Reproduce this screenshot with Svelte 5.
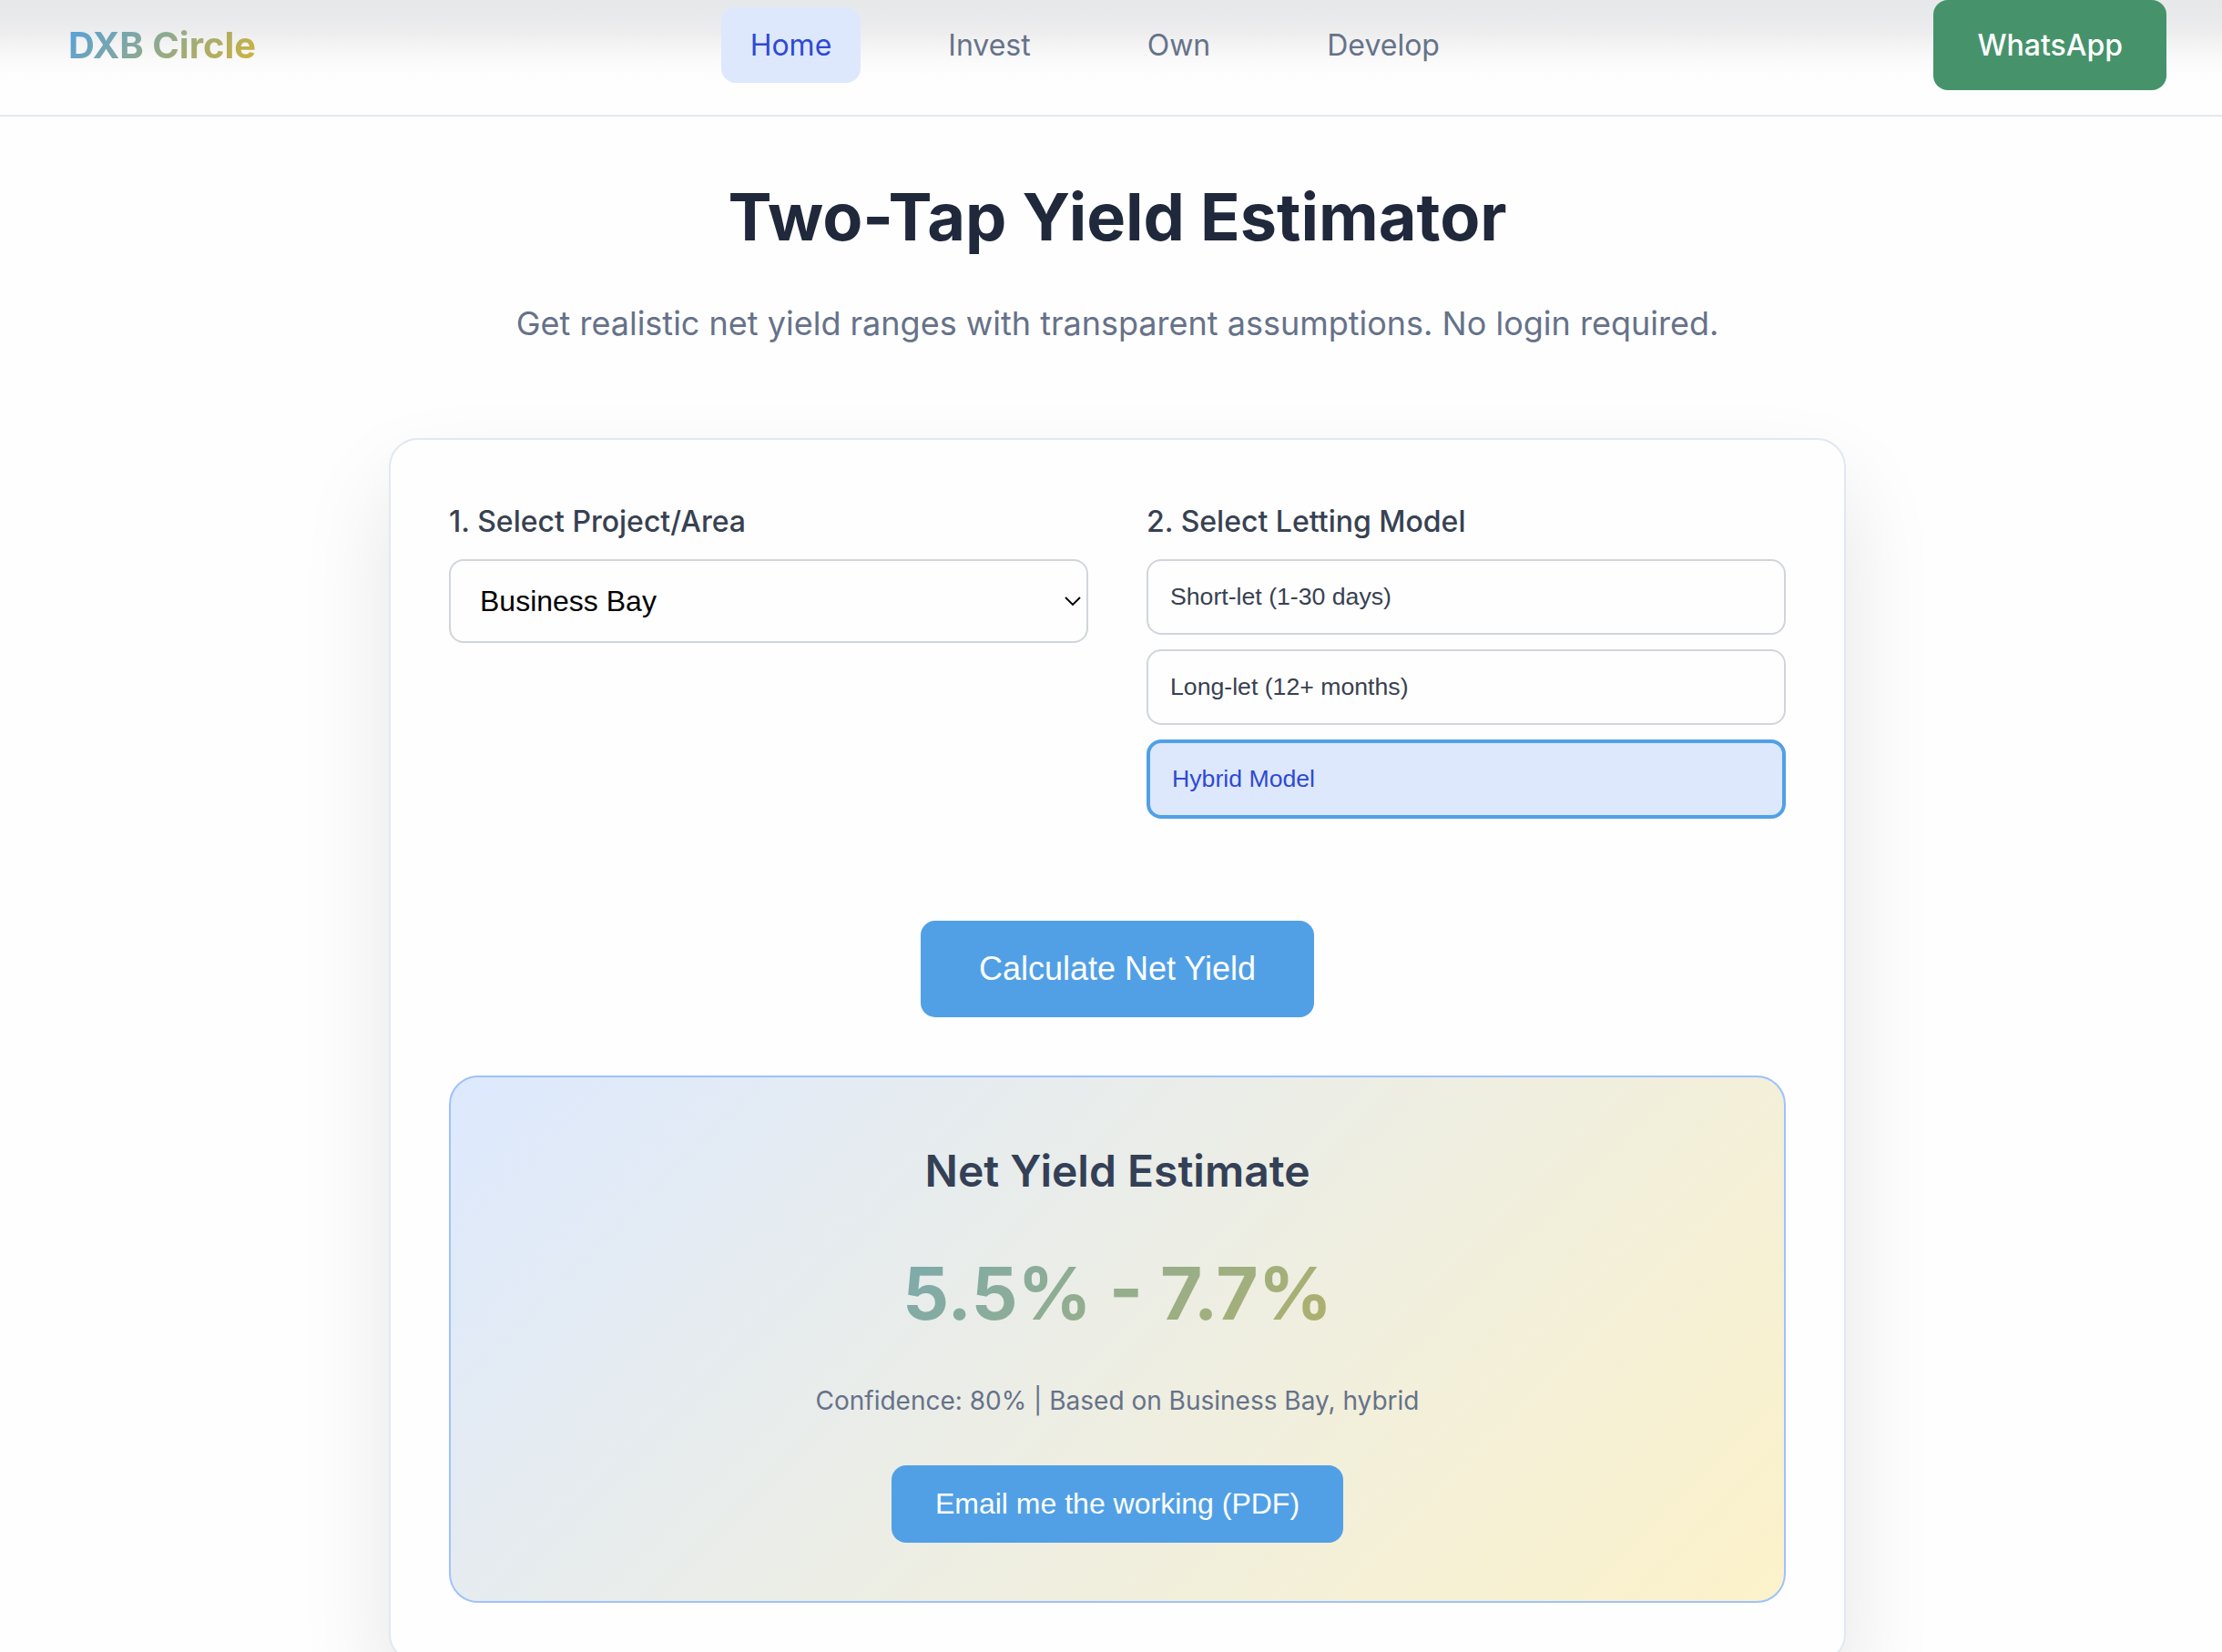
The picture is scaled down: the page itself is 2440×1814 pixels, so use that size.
<script>
  const links = ['Home', 'Invest', 'Own', 'Develop'];
  const models = [
    { id: 'short', label: 'Short-let (1-30 days)' },
    { id: 'long', label: 'Long-let (12+ months)' },
    { id: 'hybrid', label: 'Hybrid Model' }
  ];
  let active = $state('Home');
  let model = $state('hybrid');
</script>

<div class="viewport">
  <div class="page">
    <header>
      <div class="logo">DXB Circle</div>
      <nav>
        {#each links as link}
          <button class="link" class:active={active === link} onclick={() => (active = link)}>{link}</button>
        {/each}
      </nav>
      <button class="whatsapp">WhatsApp</button>
    </header>

    <main>
      <h1>Two-Tap Yield Estimator</h1>
      <p class="lead">Get realistic net yield ranges with transparent assumptions. No login required.</p>

      <section class="card">
        <div class="fields">
          <div>
            <div class="label">1. Select Project/Area</div>
            <div class="select">
              <span>Business Bay</span>
              <svg width="20" height="12" viewBox="0 0 20 12"><path d="M2 2l8 8 8-8" fill="none" stroke="#000" stroke-width="1.9" /></svg>
            </div>
          </div>
          <div>
            <div class="label">2. Select Letting Model</div>
            <div class="options">
              {#each models as m}
                <button class="option" class:selected={model === m.id} onclick={() => (model = m.id)}>{m.label}</button>
              {/each}
            </div>
          </div>
        </div>

        <button class="primary calc">Calculate Net Yield</button>

        <div class="result">
          <h2>Net Yield Estimate</h2>
          <div class="range">5.5% - 7.7%</div>
          <p class="basis">Confidence: 80% | Based on Business Bay, hybrid</p>
          <button class="primary email">Email me the working (PDF)</button>
        </div>
      </section>
    </main>
  </div>
</div>

<style>
  :global(body) {
    margin: 0;
    background: #fff;
  }
  .viewport {
    height: 1814px;
    overflow: hidden;
    background: #fefefe;
    font-family: Inter, sans-serif;
    font-size: 32px;
    line-height: 1.6;
  }
  .page {
    width: 2454px;
  }
  button {
    border: 0;
    margin: 0;
    font-family: 'Liberation Sans', Arial, sans-serif;
    line-height: normal;
    border-radius: 16px;
    cursor: pointer;
  }
  header {
    box-sizing: border-box;
    height: 128px;
    padding: 0 75px 27px;
    display: flex;
    align-items: center;
    justify-content: space-between;
    border-bottom: 2px solid #e2e8f0;
    background: linear-gradient(#e7e8ea 0, #e9eaec 22px, #ededee 35px, #f4f4f5 50px, #fafafa 66px, #fdfdfd 80px, #fefefe 92px);
  }
  .logo {
    font-size: 40px;
    font-weight: 700;
    background: linear-gradient(135deg, #4fa0e5, #d6b330);
    background-clip: text;
    color: transparent;
  }
  nav {
    display: flex;
    gap: 64px;
  }
  .link {
    padding: 16px 32px;
    font: 400 32px/1.6 Inter, sans-serif;
    color: #667289;
    background: none;
  }
  .link.active {
    color: #2f49d3;
    background: #dde8fd;
  }
  .whatsapp {
    padding: 24px 48px;
    font: 500 32px/1.6 Inter, sans-serif;
    color: #fff;
    background: #46936b;
  }
  main {
    width: 1600px;
    margin: 0 auto;
    padding-top: 64px;
    text-align: center;
  }
  h1 {
    margin: 0 0 42px;
    font-size: 72px;
    font-weight: 700;
    line-height: 92px;
    color: #20283b;
  }
  .lead {
    margin: 0 0 97px;
    font-size: 36px;
    line-height: 58px;
    color: #667289;
  }
  .card {
    padding: 64px;
    border: 2px solid #e2e8f0;
    border-radius: 32px;
    background: #fefefe;
    box-shadow: 0 50px 100px rgba(0, 0, 0, 0.1);
  }
  .fields {
    display: grid;
    grid-template-columns: 1fr 1fr;
    gap: 64px;
    text-align: left;
  }
  .label {
    margin-bottom: 16px;
    font-weight: 500;
    color: #374151;
  }
  .select {
    box-sizing: border-box;
    height: 92px;
    padding: 0 5px 0 32px;
    display: flex;
    align-items: center;
    justify-content: space-between;
    border: 2px solid #d1d5db;
    border-radius: 16px;
    font-family: 'Liberation Sans', Arial, sans-serif;
    line-height: normal;
    color: #000;
  }
  .options {
    display: flex;
    flex-direction: column;
    gap: 16px;
  }
  .option {
    padding: 24px;
    border: 2px solid #d1d5db;
    font-size: 26.667px;
    text-align: left;
    color: #374151;
    background: #fefefe;
  }
  .option.selected {
    border: 4px solid #51a0e6;
    color: #2f49d3;
    background: #dde8fd;
  }
  .primary {
    color: #fff;
    background: #51a0e6;
  }
  .calc {
    margin-top: 112px;
    padding: 32px 64px;
    font-size: 36px;
  }
  .result {
    margin-top: 64px;
    padding: 64px;
    border: 2px solid #9ec2fc;
    border-radius: 32px;
    background: linear-gradient(135deg, #dde9fe, #fcf2ca);
  }
  h2 {
    margin: 0 0 32px;
    font-size: 48px;
    font-weight: 600;
    line-height: 77px;
    color: #344056;
  }
  .range {
    margin-bottom: 32px;
    font-size: 80px;
    font-weight: 700;
    line-height: 128px;
    background: linear-gradient(135deg, #52a5e3, #d8b636);
    background-clip: text;
    color: transparent;
  }
  .basis {
    margin: 0 0 48px;
    font-size: 28px;
    color: #667289;
  }
  .email {
    padding: 24px 48px;
    font-size: 32px;
  }
</style>
